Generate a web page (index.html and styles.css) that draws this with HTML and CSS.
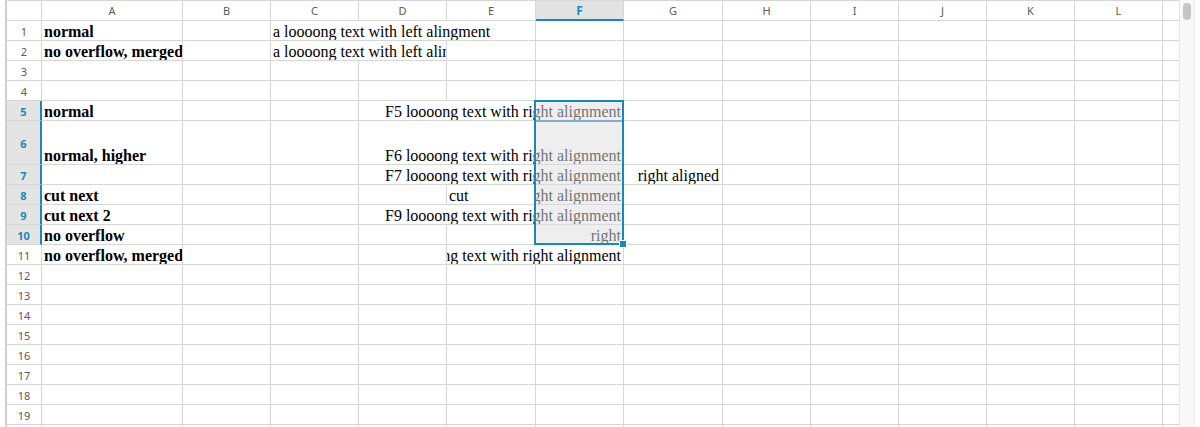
FILE: index.html
```html
<!DOCTYPE html>
<html>
<head>
<meta charset="utf-8">
<link rel="stylesheet" href="styles.css">
</head>
<body>
<div class="app">
  <div class="sheet">
    <div class="row head">
      <div class="corner"></div>
      <div class="ch">A</div><div class="ch">B</div><div class="ch">C</div><div class="ch">D</div><div class="ch">E</div>
      <div class="ch sel">F</div><div class="ch">G</div><div class="ch">H</div><div class="ch">I</div><div class="ch">J</div>
      <div class="ch">K</div><div class="ch">L</div><div class="ch last"></div>
    </div>

    <div class="row">
      <div class="rh">1</div>
      <div class="c b">normal</div><div class="c"></div>
      <div class="c s3"><span>a loooong text with left alingment</span></div>
      <div class="c"></div><div class="c"></div><div class="c"></div><div class="c"></div><div class="c"></div><div class="c"></div><div class="c"></div><div class="c last"></div>
    </div>

    <div class="row">
      <div class="rh">2</div>
      <div class="c b">no overflow, merged</div><div class="c"></div>
      <div class="c s2"><span>a loooong text with left alingment</span></div>
      <div class="c"></div><div class="c"></div><div class="c"></div><div class="c"></div><div class="c"></div><div class="c"></div><div class="c"></div><div class="c"></div><div class="c last"></div>
    </div>

    <div class="row">
      <div class="rh">3</div>
      <div class="c"></div><div class="c"></div><div class="c"></div><div class="c"></div><div class="c"></div><div class="c"></div><div class="c"></div><div class="c"></div><div class="c"></div><div class="c"></div><div class="c"></div><div class="c"></div><div class="c last"></div>
    </div>

    <div class="row">
      <div class="rh">4</div>
      <div class="c"></div><div class="c"></div><div class="c"></div><div class="c"></div><div class="c"></div><div class="c"></div><div class="c"></div><div class="c"></div><div class="c"></div><div class="c"></div><div class="c"></div><div class="c"></div><div class="c last"></div>
    </div>

    <div class="row">
      <div class="rh sel">5</div>
      <div class="c b">normal</div><div class="c"></div><div class="c"></div>
      <div class="c s3 r"><span>F5 loooong text with right alignment</span></div>
      <div class="c"></div><div class="c"></div><div class="c"></div><div class="c"></div><div class="c"></div><div class="c"></div><div class="c last"></div>
    </div>

    <div class="row tall">
      <div class="rh sel">6</div>
      <div class="c b">normal, higher</div><div class="c"></div><div class="c"></div>
      <div class="c s3 r"><span>F6 loooong text with right alignment</span></div>
      <div class="c"></div><div class="c"></div><div class="c"></div><div class="c"></div><div class="c"></div><div class="c"></div><div class="c last"></div>
    </div>

    <div class="row">
      <div class="rh sel">7</div>
      <div class="c"></div><div class="c"></div><div class="c"></div>
      <div class="c s3 r"><span>F7 loooong text with right alignment</span></div>
      <div class="c r g"><span>right aligned</span></div>
      <div class="c"></div><div class="c"></div><div class="c"></div><div class="c"></div><div class="c"></div><div class="c last"></div>
    </div>

    <div class="row">
      <div class="rh sel">8</div>
      <div class="c b">cut next</div><div class="c"></div><div class="c"></div><div class="c"></div>
      <div class="c"><span>cut</span></div>
      <div class="c r"><span>F8 loooong text with right alignment</span></div>
      <div class="c"></div><div class="c"></div><div class="c"></div><div class="c"></div><div class="c"></div><div class="c"></div><div class="c last"></div>
    </div>

    <div class="row">
      <div class="rh sel">9</div>
      <div class="c b">cut next 2</div><div class="c"></div><div class="c"></div>
      <div class="c s3 r"><span>F9 loooong text with right alignment</span></div>
      <div class="c"></div><div class="c"></div><div class="c"></div><div class="c"></div><div class="c"></div><div class="c"></div><div class="c last"></div>
    </div>

    <div class="row">
      <div class="rh sel">10</div>
      <div class="c b">no overflow</div><div class="c"></div><div class="c"></div><div class="c"></div><div class="c"></div>
      <div class="c r"><span>right</span></div>
      <div class="c"></div><div class="c"></div><div class="c"></div><div class="c"></div><div class="c"></div><div class="c"></div><div class="c last"></div>
    </div>

    <div class="row">
      <div class="rh">11</div>
      <div class="c b">no overflow, merged</div><div class="c"></div><div class="c"></div><div class="c"></div>
      <div class="c s2 r"><span>E11 loooong text with right alignment</span></div>
      <div class="c"></div><div class="c"></div><div class="c"></div><div class="c"></div><div class="c"></div><div class="c"></div><div class="c last"></div>
    </div>

    <div class="row">
      <div class="rh">12</div>
      <div class="c"></div><div class="c"></div><div class="c"></div><div class="c"></div><div class="c"></div><div class="c"></div><div class="c"></div><div class="c"></div><div class="c"></div><div class="c"></div><div class="c"></div><div class="c"></div><div class="c last"></div>
    </div>
    <div class="row">
      <div class="rh">13</div>
      <div class="c"></div><div class="c"></div><div class="c"></div><div class="c"></div><div class="c"></div><div class="c"></div><div class="c"></div><div class="c"></div><div class="c"></div><div class="c"></div><div class="c"></div><div class="c"></div><div class="c last"></div>
    </div>
    <div class="row">
      <div class="rh">14</div>
      <div class="c"></div><div class="c"></div><div class="c"></div><div class="c"></div><div class="c"></div><div class="c"></div><div class="c"></div><div class="c"></div><div class="c"></div><div class="c"></div><div class="c"></div><div class="c"></div><div class="c last"></div>
    </div>
    <div class="row">
      <div class="rh">15</div>
      <div class="c"></div><div class="c"></div><div class="c"></div><div class="c"></div><div class="c"></div><div class="c"></div><div class="c"></div><div class="c"></div><div class="c"></div><div class="c"></div><div class="c"></div><div class="c"></div><div class="c last"></div>
    </div>
    <div class="row">
      <div class="rh">16</div>
      <div class="c"></div><div class="c"></div><div class="c"></div><div class="c"></div><div class="c"></div><div class="c"></div><div class="c"></div><div class="c"></div><div class="c"></div><div class="c"></div><div class="c"></div><div class="c"></div><div class="c last"></div>
    </div>
    <div class="row">
      <div class="rh">17</div>
      <div class="c"></div><div class="c"></div><div class="c"></div><div class="c"></div><div class="c"></div><div class="c"></div><div class="c"></div><div class="c"></div><div class="c"></div><div class="c"></div><div class="c"></div><div class="c"></div><div class="c last"></div>
    </div>
    <div class="row">
      <div class="rh">18</div>
      <div class="c"></div><div class="c"></div><div class="c"></div><div class="c"></div><div class="c"></div><div class="c"></div><div class="c"></div><div class="c"></div><div class="c"></div><div class="c"></div><div class="c"></div><div class="c"></div><div class="c last"></div>
    </div>
    <div class="row">
      <div class="rh">19</div>
      <div class="c"></div><div class="c"></div><div class="c"></div><div class="c"></div><div class="c"></div><div class="c"></div><div class="c"></div><div class="c"></div><div class="c"></div><div class="c"></div><div class="c"></div><div class="c"></div><div class="c last"></div>
    </div>
    <div class="row">
      <div class="rh">20</div>
      <div class="c"></div><div class="c"></div><div class="c"></div><div class="c"></div><div class="c"></div><div class="c"></div><div class="c"></div><div class="c"></div><div class="c"></div><div class="c"></div><div class="c"></div><div class="c"></div><div class="c last"></div>
    </div>

    <div class="selection">
      <div class="active"></div>
      <div class="handle"></div>
    </div>
  </div>
  <div class="scrollbar"><div class="thumb"></div></div>
</div>
</body>
</html>
```

FILE: styles.css
```css
html, body {
  margin: 0;
  padding: 0;
  background: #ffffff;
  overflow: hidden;
}

.app {
  display: flex;
  height: 427px;
  overflow: hidden;
}

.sheet {
  position: relative;
  margin-left: 5px;
  width: 1172px;
  border-left: 2px solid #d0d0d0;
  border-top: 1px solid #d6d6d6;
  flex: none;
}

.row {
  display: grid;
  grid-template-columns: 35px 141px 88px 88px 88px 89px 88px 99px 88px 88px 88px 88px 88px 16px;
  height: 20px;
}

.row.tall {
  height: 44px;
}

.row > div {
  box-sizing: border-box;
  border-right: 1px solid #d6d6d6;
  border-bottom: 1px solid #d6d6d6;
  min-width: 0;
}

.row > .last {
  border-right: none;
}

.corner,
.ch,
.rh {
  font-family: "Noto Sans", "Open Sans", sans-serif;
  font-size: 11px;
  color: #5a5a5a;
  display: flex;
  align-items: center;
  justify-content: center;
  background: #ffffff;
}

.rh {
  padding-top: 1px;
}

.ch.sel {
  background: #e2e2e2;
  color: #1889b6;
  font-weight: bold;
  font-size: 12px;
  border-bottom: 2px solid #1889b6;
}

.rh.sel {
  background: #e4e4e4;
  color: #1889b6;
  font-weight: bold;
  border-right: 2px solid #1889b6;
}

.c {
  font-family: "Liberation Serif", "Times New Roman", serif;
  font-size: 16px;
  line-height: 17px;
  color: #000000;
  background: #ffffff;
  display: flex;
  align-items: flex-end;
  justify-content: flex-start;
  padding: 0 2px;
  overflow: hidden;
  white-space: nowrap;
}

.c > span {
  flex: none;
}

.c.b {
  font-weight: bold;
}

.c.r {
  justify-content: flex-end;
}

.c.g {
  padding-right: 3px;
}

.s2 {
  grid-column: span 2;
}

.s3 {
  grid-column: span 3;
}

.selection {
  position: absolute;
  left: 527px;
  top: 99px;
  width: 90px;
  height: 145px;
  box-sizing: border-box;
  border: 2px solid #1889b6;
  background: rgba(222, 222, 222, 0.5);
}

.active {
  height: 20px;
  box-sizing: border-box;
  border-bottom: 2px solid #7fb2c9;
}

.handle {
  position: absolute;
  right: -4px;
  bottom: -4px;
  width: 6px;
  height: 6px;
  background: #1889b6;
  border: 1px solid #ffffff;
  box-sizing: content-box;
  margin: -1px;
}

.scrollbar {
  flex: none;
  width: 14px;
  height: 427px;
  background: #f8f8f8;
  border-left: 1px solid #e6e6e6;
  border-right: 1px solid #ededed;
  position: relative;
}

.thumb {
  margin: 3px 0 0 3px;
  width: 8px;
  height: 17px;
  border-radius: 4px;
  background: #c4c4c4;
}
```
